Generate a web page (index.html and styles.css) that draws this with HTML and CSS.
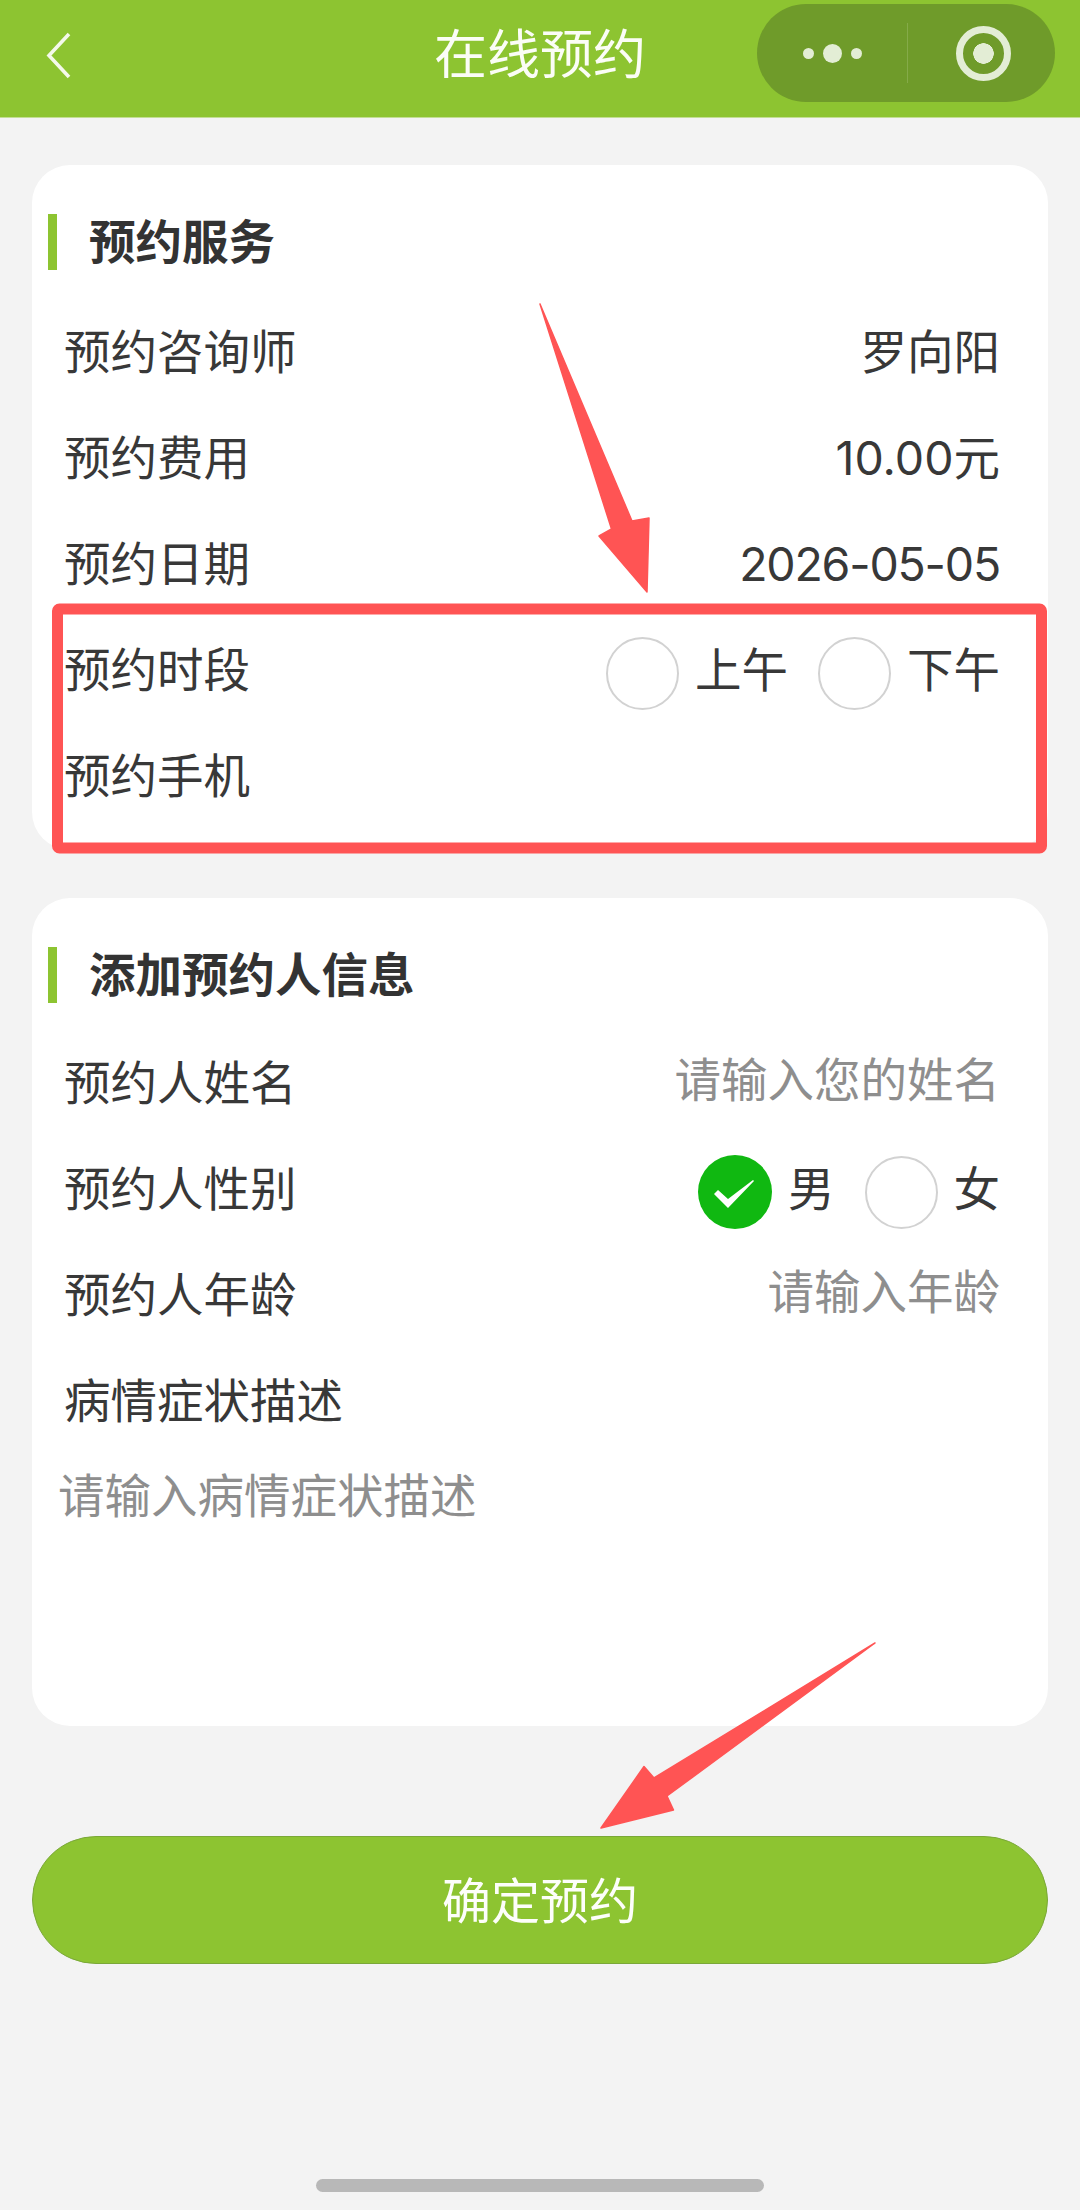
FILE: index.html
```html
<!DOCTYPE html>
<html lang="zh-CN">
<head>
<meta charset="utf-8">
<title>在线预约</title>
<link rel="stylesheet" href="styles.css">
</head>
<body>
<div class="page">
  <header class="nav">
    <div class="nav-left">
      <svg class="back" viewBox="0 0 26 47"><polyline points="23,2 3,23.5 23,45"/></svg>
    </div>
    <h1 class="nav-title">在线预约</h1>
    <div class="capsule">
      <div class="capsule-part more">
        <span class="dot"></span><span class="dot big"></span><span class="dot"></span>
      </div>
      <div class="capsule-sep"></div>
      <div class="capsule-part close"><span class="ring"></span></div>
    </div>
  </header>

  <main class="content">
    <section class="card card-service">
      <h2 class="card-title">预约服务</h2>
      <div class="row"><span>预约咨询师</span><span>罗向阳</span></div>
      <div class="row"><span>预约费用</span><span>10.00元</span></div>
      <div class="row"><span>预约日期</span><span class="date">2026-05-05</span></div>
      <div class="row">
        <span>预约时段</span>
        <div class="options">
          <label class="option"><span class="radio"></span>上午</label>
          <label class="option"><span class="radio"></span>下午</label>
        </div>
      </div>
      <div class="row"><span>预约手机</span></div>
    </section>

    <section class="card card-person">
      <h2 class="card-title">添加预约人信息</h2>
      <div class="row"><span>预约人姓名</span><span class="placeholder">请输入您的姓名</span></div>
      <div class="row">
        <span>预约人性别</span>
        <div class="options">
          <label class="option"><span class="radio checked"><svg class="tick" viewBox="0 0 74 74"><polygon points="16,39 20,35 30,44 55,25 56,26 30,53"/></svg></span>男</label>
          <label class="option"><span class="radio"></span>女</label>
        </div>
      </div>
      <div class="row"><span>预约人年龄</span><span class="placeholder">请输入年龄</span></div>
      <div class="row"><span>病情症状描述</span></div>
      <div class="textarea placeholder">请输入病情症状描述</div>
    </section>

    <button class="submit">确定预约</button>
  </main>

  <div class="home-bar"></div>

  <svg class="annotations" viewBox="0 0 1080 2210">
    <rect class="note-box" x="57.5" y="609" width="984" height="239" rx="2"/>
    <polygon class="note-arrow" points="540,304 632,521 649,518 647,592 599,536 611.5,529"/>
    <polygon class="note-arrow" points="875,1643 667,1796 673.5,1810 601,1828 644,1766.5 654,1778"/>
  </svg>
</div>
</body>
</html>
```
FILE: styles.css
```css
* { box-sizing: border-box; }
html, body { margin: 0; padding: 0; }
body {
  background: #f3f3f3;
  color: #383838;
  font-family: Inter, "Noto Sans CJK SC", sans-serif;
  font-size: 46.5px;
}
.page {
  position: relative;
  width: 1080px;
  height: 2210px;
  overflow: hidden;
}

/* nav */
.nav {
  display: grid;
  grid-template-columns: 1fr auto 1fr;
  height: 118px;
  background: #8dc431;
  border-bottom: 1px solid #c3de94;
}
.nav-left { padding: 32px 0 0 46px; }
.back { display: block; width: 26px; height: 47px; }
.back polyline { fill: none; stroke: #f4f9ea; stroke-width: 3.6; }
.nav-title {
  margin: 0;
  color: #fbfdf6;
  font-size: 53px;
  font-weight: 400;
  line-height: 110px;
}
.capsule {
  justify-self: end;
  display: flex;
  align-items: center;
  width: 298px;
  height: 98px;
  margin: 4px 25px 0 0;
  border-radius: 49px;
  background: #6f9b2a;
}
.capsule-part { display: flex; align-items: center; justify-content: center; }
.more { width: 150px; gap: 7px; }
.close { flex: 1; padding-left: 4px; }
.capsule-sep { width: 1px; height: 60px; background: #85ab49; }
.dot { width: 11px; height: 11px; border-radius: 50%; background: #e3edd5; }
.dot.big { width: 19px; height: 19px; margin: 0 2px; }
.ring {
  width: 55px;
  height: 55px;
  border: 7px solid #e3edd5;
  border-radius: 50%;
  background: radial-gradient(circle, #e3edd5 0 10px, transparent 10.5px);
}

/* content */
.content {
  display: flex;
  flex-direction: column;
  padding: 47px 32px 0;
}
.card {
  background: #fff;
  border-radius: 38px;
}
.card-service { height: 685px; padding-top: 49px; }
.card-person { height: 828px; margin-top: 48px; padding-top: 49px; }
.card-title {
  margin: 0 0 29px 16px;
  padding-left: 32px;
  height: 56px;
  border-left: 9px solid #8dc431;
  color: #333;
  font-size: 46.5px;
  font-weight: 700;
  line-height: 56px;
}
.card-person .card-title { margin-bottom: 27px; }
.row {
  display: flex;
  align-items: center;
  justify-content: space-between;
  height: 106px;
  padding: 0 48px 0 32px;
  line-height: 60px;
}
.date { letter-spacing: -1.2px; }
.placeholder { color: #8e8e8e; }
.row .placeholder { margin-bottom: 7px; }
.options { display: flex; gap: 30px; }
.option { display: flex; align-items: center; gap: 16px; }
.radio {
  display: block;
  width: 73px;
  height: 73px;
  margin-top: 6px;
  border: 2.5px solid #d2d2d2;
  border-radius: 50%;
  background: #fff;
}
.radio.checked { width: 74px; height: 74px; border: 0; background: #10b811; }
.tick { display: block; width: 74px; height: 74px; }
.tick polygon { fill: #fff; }
.textarea {
  padding: 12px 0 0 26px;
  line-height: 60px;
}

.submit {
  display: block;
  width: 1016px;
  height: 128px;
  margin-top: 110px;
  padding: 0 0 6px;
  background: #8dc431;
  border: 1px solid #7aa838;
  border-radius: 64px;
  color: #fdfefa;
  font-family: inherit;
  font-size: 49px;
}

.home-bar {
  width: 448px;
  height: 13px;
  margin: 215px 0 0 316px;
  border-radius: 7px;
  background: #b8b8b8;
}

/* red annotations drawn over the screen */
.annotations {
  position: absolute;
  left: 0;
  top: 0;
  width: 1080px;
  height: 2210px;
  pointer-events: none;
}
.note-box { fill: none; stroke: #ff5454; stroke-width: 11; }
.note-arrow { fill: #ff5454; stroke: #ff5454; stroke-width: 1.5; stroke-linejoin: round; }
```
